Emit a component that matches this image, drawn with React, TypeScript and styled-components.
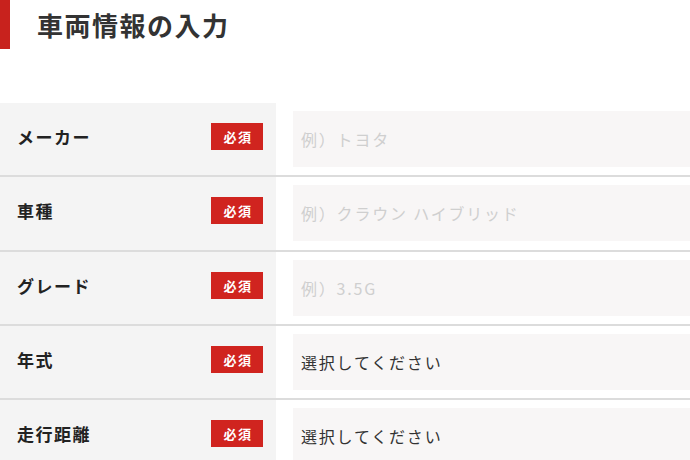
import React from 'react';
import styled, { createGlobalStyle } from 'styled-components';

const GlobalStyle = createGlobalStyle`
  body {
    margin: 0;
    background: #fff;
    font-family: "Noto Sans CJK JP", "Noto Sans", sans-serif;
    color: #333;
  }
`;

const Page = styled.div`
  width: 690px;
  overflow: hidden;
`;

const Header = styled.header`
  display: flex;
  align-items: center;
  height: 49px;
`;

const Bar = styled.span`
  width: 10px;
  align-self: stretch;
  background: #c8221d;
`;

const Title = styled.h2`
  margin: 0 0 0 27px;
  font-size: 26px;
  font-weight: 700;
  letter-spacing: 1.5px;
  line-height: 1;
  color: #333;
`;

const Form = styled.div`
  margin-top: 54px;
`;

const Row = styled.div`
  display: flex;
  height: 72.3px;
  border-bottom: 2px solid #dcdcdc;
`;

const LabelCell = styled.div`
  width: 276px;
  flex-shrink: 0;
  background: #f4f4f4;
  display: flex;
  align-items: flex-start;
  justify-content: space-between;
  padding: 20px 13px 0 17px;
  box-sizing: border-box;
`;

const Label = styled.span`
  font-size: 17px;
  font-weight: 700;
  letter-spacing: 1.5px;
  line-height: 27px;
  color: #222;
`;

const Badge = styled.span`
  width: 52px;
  height: 27px;
  display: flex;
  align-items: center;
  justify-content: center;
  background: #d0241f;
  color: #fff;
  font-size: 13px;
  font-weight: 700;
  letter-spacing: 1.5px;
  padding-left: 2px;
  box-sizing: border-box;
`;

const Field = styled.div`
  flex: 1;
  padding: 8px 0 8px 17px;
`;

const Input = styled.div<{ $filled?: boolean }>`
  height: 56px;
  background: #f8f6f6;
  display: flex;
  align-items: center;
  padding-left: 8px;
  font-size: 16px;
  letter-spacing: 1.8px;
  color: ${(p) => (p.$filled ? '#333' : '#cfcfcf')};
`;

const rows = [
  { label: 'メーカー', text: '例）トヨタ' },
  { label: '車種', text: '例）クラウン ハイブリッド' },
  { label: 'グレード', text: '例）3.5G' },
  { label: '年式', text: '選択してください', filled: true },
  { label: '走行距離', text: '選択してください', filled: true }
];

export default function App() {
  return (
    <Page>
      <GlobalStyle />
      <Header>
        <Bar />
        <Title>車両情報の入力</Title>
      </Header>
      <Form>
        {rows.map((r) => (
          <Row key={r.label}>
            <LabelCell>
              <Label>{r.label}</Label>
              <Badge>必須</Badge>
            </LabelCell>
            <Field>
              <Input $filled={r.filled}>{r.text}</Input>
            </Field>
          </Row>
        ))}
      </Form>
    </Page>
  );
}
